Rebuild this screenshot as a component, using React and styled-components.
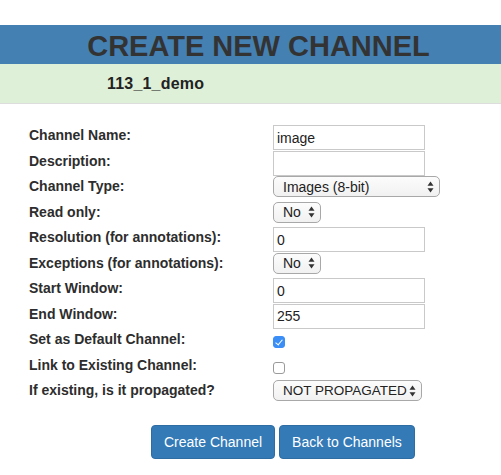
import React from "react";
import styled, { createGlobalStyle } from "styled-components";

const GlobalStyle = createGlobalStyle`
  body {
    margin: 0;
    font-family: "Liberation Sans", Arial, Helvetica, sans-serif;
    color: #333;
    background: #fff;
  }
`;

const Page = styled.div`
  padding-top: 25px;
`;

const TitleBar = styled.div`
  height: 39px;
  background: #4580b2;
  display: flex;
  align-items: center;
  justify-content: center;
  padding-left: 16px;
`;

const Title = styled.h1`
  margin: 0;
  padding-top: 3px;
  font-size: 29px;
  font-weight: bold;
  line-height: 1;
  color: #333;
`;

const SubBar = styled.div`
  height: 39px;
  background: #dff0d8;
  border-bottom: 1px solid #ddd;
  display: flex;
  align-items: center;
  padding-left: 107px;
  font-size: 16px;
  font-weight: bold;
  letter-spacing: 0.2px;
  color: #222;
`;

const Form = styled.div`
  margin-top: 18px;
  padding-left: 29px;
`;

const Row = styled.div`
  display: flex;
  align-items: flex-start;
  height: 25.5px;
`;

const Label = styled.label`
  width: 244px;
  flex-shrink: 0;
  padding-top: 1px;
  font-size: 14px;
  font-weight: bold;
  line-height: 25.5px;
  color: #2d2d2d;
`;

const TextInput = styled.input`
  box-sizing: border-box;
  margin: 3px 0 0;
  width: 152px;
  height: 25px;
  padding: 0 3px;
  border: 1px solid #c9c9c9;
  border-radius: 0;
  font-family: inherit;
  font-size: 14px;
  color: #222;
  outline: none;
`;

const SelectWrap = styled.div`
  position: relative;
  margin-top: 3px;
  width: ${(p) => p.w}px;
  height: 21px;
`;

const Select = styled.select`
  appearance: none;
  box-sizing: border-box;
  width: 100%;
  height: 100%;
  margin: 0;
  padding: 0 14px 0 9px;
  border: 1px solid #a8a8a8;
  border-radius: 5px;
  background: linear-gradient(#fcfcfc, #f1f1f1);
  font-family: inherit;
  font-size: ${(p) => p.fs || 14}px;
  color: #222;
  outline: none;
`;

const Arrows = styled.svg`
  position: absolute;
  right: 6px;
  top: 50%;
  transform: translateY(-50%);
  pointer-events: none;
`;

const Check = styled.input.attrs({ type: "checkbox" })`
  appearance: none;
  box-sizing: border-box;
  position: relative;
  margin: 10px 0 0;
  width: 12px;
  height: 12px;
  border: 1px solid #9a9a9a;
  border-radius: 3px;
  background: #fff;

  &:checked {
    background: #3a8ef6;
    border-color: #3a8ef6;
  }

  &:checked::after {
    content: "";
    position: absolute;
    left: 3px;
    top: 1px;
    width: 3px;
    height: 6px;
    border: solid #fff;
    border-width: 0 1.5px 1.5px 0;
    transform: rotate(40deg);
  }
`;

const ButtonRow = styled.div`
  display: flex;
  gap: 4px;
  margin-top: 22px;
  padding-left: 151px;
`;

const Button = styled.button`
  height: 34px;
  padding: 0 12px;
  border: 1px solid #2e6da4;
  border-radius: 4px;
  background: #337ab7;
  color: #fff;
  font-family: inherit;
  font-size: 14px;
  cursor: pointer;
`;

const SelectField = ({ w, fs, value, options }) => (
  <SelectWrap w={w}>
    <Select fs={fs} defaultValue={value}>
      {options.map((o) => (
        <option key={o}>{o}</option>
      ))}
    </Select>
    <Arrows width="7" height="12" viewBox="0 0 7 12">
      <path d="M3.5 0.5 L6.5 4.8 H0.5 Z" fill="#333" />
      <path d="M0.5 7.2 H6.5 L3.5 11.5 Z" fill="#333" />
    </Arrows>
  </SelectWrap>
);

export default function App() {
  return (
    <Page>
      <GlobalStyle />
      <TitleBar>
        <Title>CREATE NEW CHANNEL</Title>
      </TitleBar>
      <SubBar>113_1_demo</SubBar>

      <Form>
        <Row>
          <Label>Channel Name:</Label>
          <TextInput defaultValue="image" />
        </Row>
        <Row>
          <Label>Description:</Label>
          <TextInput />
        </Row>
        <Row>
          <Label>Channel Type:</Label>
          <SelectField
            w={167}
            value="Images (8-bit)"
            options={["Images (8-bit)", "Images (16-bit)", "Annotations"]}
          />
        </Row>
        <Row>
          <Label>Read only:</Label>
          <SelectField w={48} value="No" options={["No", "Yes"]} />
        </Row>
        <Row>
          <Label>Resolution (for annotations):</Label>
          <TextInput defaultValue="0" />
        </Row>
        <Row>
          <Label>Exceptions (for annotations):</Label>
          <SelectField w={48} value="No" options={["No", "Yes"]} />
        </Row>
        <Row>
          <Label>Start Window:</Label>
          <TextInput defaultValue="0" />
        </Row>
        <Row>
          <Label>End Window:</Label>
          <TextInput defaultValue="255" />
        </Row>
        <Row>
          <Label>Set as Default Channel:</Label>
          <Check defaultChecked />
        </Row>
        <Row>
          <Label>Link to Existing Channel:</Label>
          <Check />
        </Row>
        <Row>
          <Label>If existing, is it propagated?</Label>
          <SelectField
            w={149}
            fs={13.5}
            value="NOT PROPAGATED"
            options={["NOT PROPAGATED", "PROPAGATED"]}
          />
        </Row>
      </Form>

      <ButtonRow>
        <Button>Create Channel</Button>
        <Button>Back to Channels</Button>
      </ButtonRow>
    </Page>
  );
}
